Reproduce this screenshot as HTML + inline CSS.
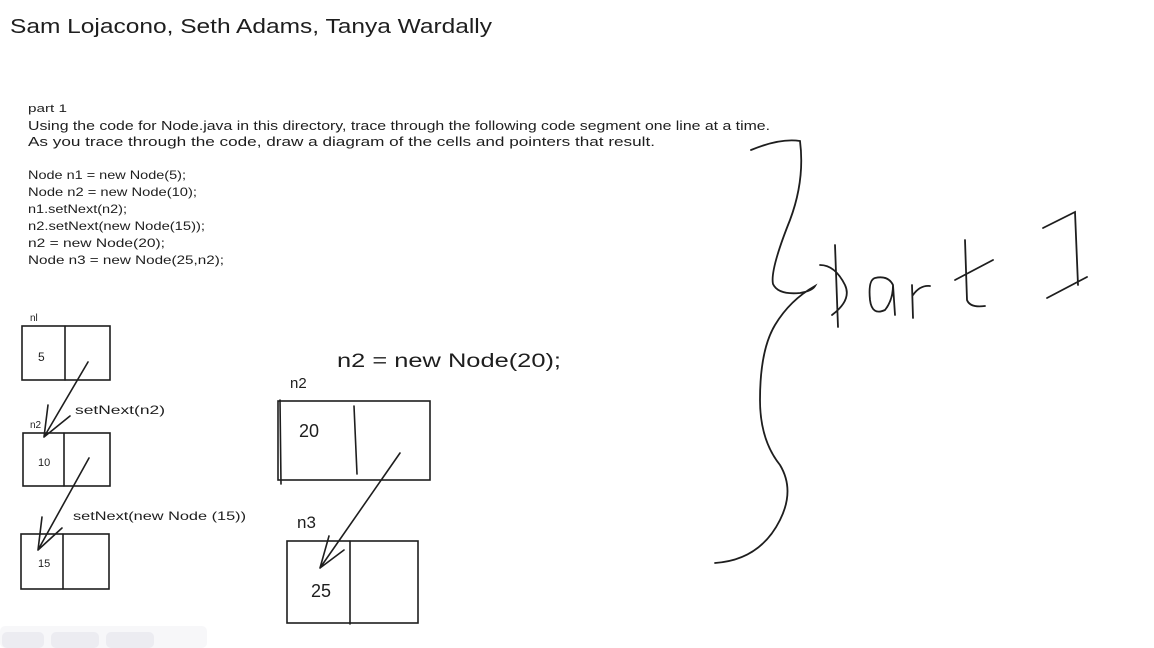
<!DOCTYPE html>
<html><head><meta charset="utf-8"><style>
html,body{margin:0;padding:0;background:#fff;width:1154px;height:648px;overflow:hidden}
svg{display:block}
text{font-family:"Liberation Sans",sans-serif;fill:#1e1e1e}
</style></head><body>
<svg width="1154" height="648" viewBox="0 0 1154 648" xmlns="http://www.w3.org/2000/svg">
<g>
<text x="10" y="33" font-size="20" textLength="482" lengthAdjust="spacingAndGlyphs">Sam Lojacono, Seth Adams, Tanya Wardally</text>
<text x="28" y="112" font-size="11" textLength="39" lengthAdjust="spacingAndGlyphs">part 1</text>
<text x="28" y="130" font-size="12.5" textLength="742" lengthAdjust="spacingAndGlyphs">Using the code for Node.java in this directory, trace through the following code segment one line at a time.</text>
<text x="28" y="146" font-size="12.5" textLength="627" lengthAdjust="spacingAndGlyphs">As you trace through the code, draw a diagram of the cells and pointers that result.</text>
<text x="28" y="179" font-size="12" textLength="158" lengthAdjust="spacingAndGlyphs">Node n1 = new Node(5);</text>
<text x="28" y="196" font-size="12" textLength="169" lengthAdjust="spacingAndGlyphs">Node n2 = new Node(10);</text>
<text x="28" y="213" font-size="12" textLength="99" lengthAdjust="spacingAndGlyphs">n1.setNext(n2);</text>
<text x="28" y="230" font-size="12" textLength="177" lengthAdjust="spacingAndGlyphs">n2.setNext(new Node(15));</text>
<text x="28" y="247" font-size="12" textLength="137" lengthAdjust="spacingAndGlyphs">n2 = new Node(20);</text>
<text x="28" y="264" font-size="12" textLength="196" lengthAdjust="spacingAndGlyphs">Node n3 = new Node(25,n2);</text>
</g>
<g fill="none" stroke="#1e1e1e" stroke-width="1.6" stroke-linecap="round">
<!-- box n1 -->
<rect x="22" y="326" width="88" height="54"/><line x1="65" y1="326" x2="65" y2="380"/>
<rect x="23" y="433" width="87" height="53"/><line x1="64" y1="433" x2="64" y2="486"/>
<rect x="21" y="534" width="88" height="55"/><line x1="63" y1="534" x2="63" y2="589"/>
<path d="M88 362 L44 437 M44 437 L48 405 M44 437 L70 416"/>
<path d="M89 458 L38 550 M38 550 L42 517 M38 550 L62 528"/>
<rect x="278" y="401" width="152" height="79"/><line x1="354" y1="406" x2="357" y2="474"/><line x1="280" y1="400" x2="281" y2="484"/>
<rect x="287" y="541" width="131" height="82"/><line x1="350" y1="541" x2="350" y2="624"/>
<path d="M400 453 L320 568 M320 568 L329 536 M320 568 L344 550"/>
<!-- brace -->
<path d="M751 150 Q780 138 800 141 Q805 180 790 220 Q770 270 773 284 Q778 295 800 293 Q812 291 815 286 Q790 300 775 325 Q760 350 760 400 Q760 440 780 465 Q795 490 780 520 Q760 560 715 563" stroke-width="1.8"/>
<!-- part 1 -->
<path d="M835 245 L838 327 M820 265 Q835 265 845 285 Q852 300 832 315 M875 278 Q868 280 870 300 Q872 316 885 310 Q893 300 893 285 Q888 275 875 278 M893 285 L895 315 M912 285 L913 318 M913 295 Q920 285 930 286 M965 240 L967 300 Q970 308 985 306 M955 280 L993 260 M1043 228 L1075 212 L1078 285 M1047 298 L1087 277" stroke-width="1.8"/>
</g>
<g>
<text x="30" y="321" font-size="10">nl</text>
<text x="38" y="361" font-size="12">5</text>
<text x="30" y="428" font-size="10">n2</text>
<text x="38" y="466" font-size="11">10</text>
<text x="38" y="567" font-size="11">15</text>
<text x="75" y="414" font-size="12" textLength="90" lengthAdjust="spacingAndGlyphs">setNext(n2)</text>
<text x="73" y="520" font-size="12" textLength="173" lengthAdjust="spacingAndGlyphs">setNext(new Node (15))</text>
<text x="337" y="367" font-size="19" textLength="224" lengthAdjust="spacingAndGlyphs">n2 = new Node(20);</text>
<text x="290" y="388" font-size="15">n2</text>
<text x="299" y="437" font-size="18">20</text>
<text x="297" y="528" font-size="17">n3</text>
<text x="311" y="597" font-size="18">25</text>
</g>
<rect x="0" y="626" width="207" height="22" rx="5" fill="#f7f7f9"/>
<rect x="2" y="632" width="42" height="16" rx="5" fill="#ececf1"/>
<rect x="51" y="632" width="48" height="16" rx="5" fill="#ececf1"/>
<rect x="106" y="632" width="48" height="16" rx="5" fill="#ececf1"/>
</svg>
</body></html>
